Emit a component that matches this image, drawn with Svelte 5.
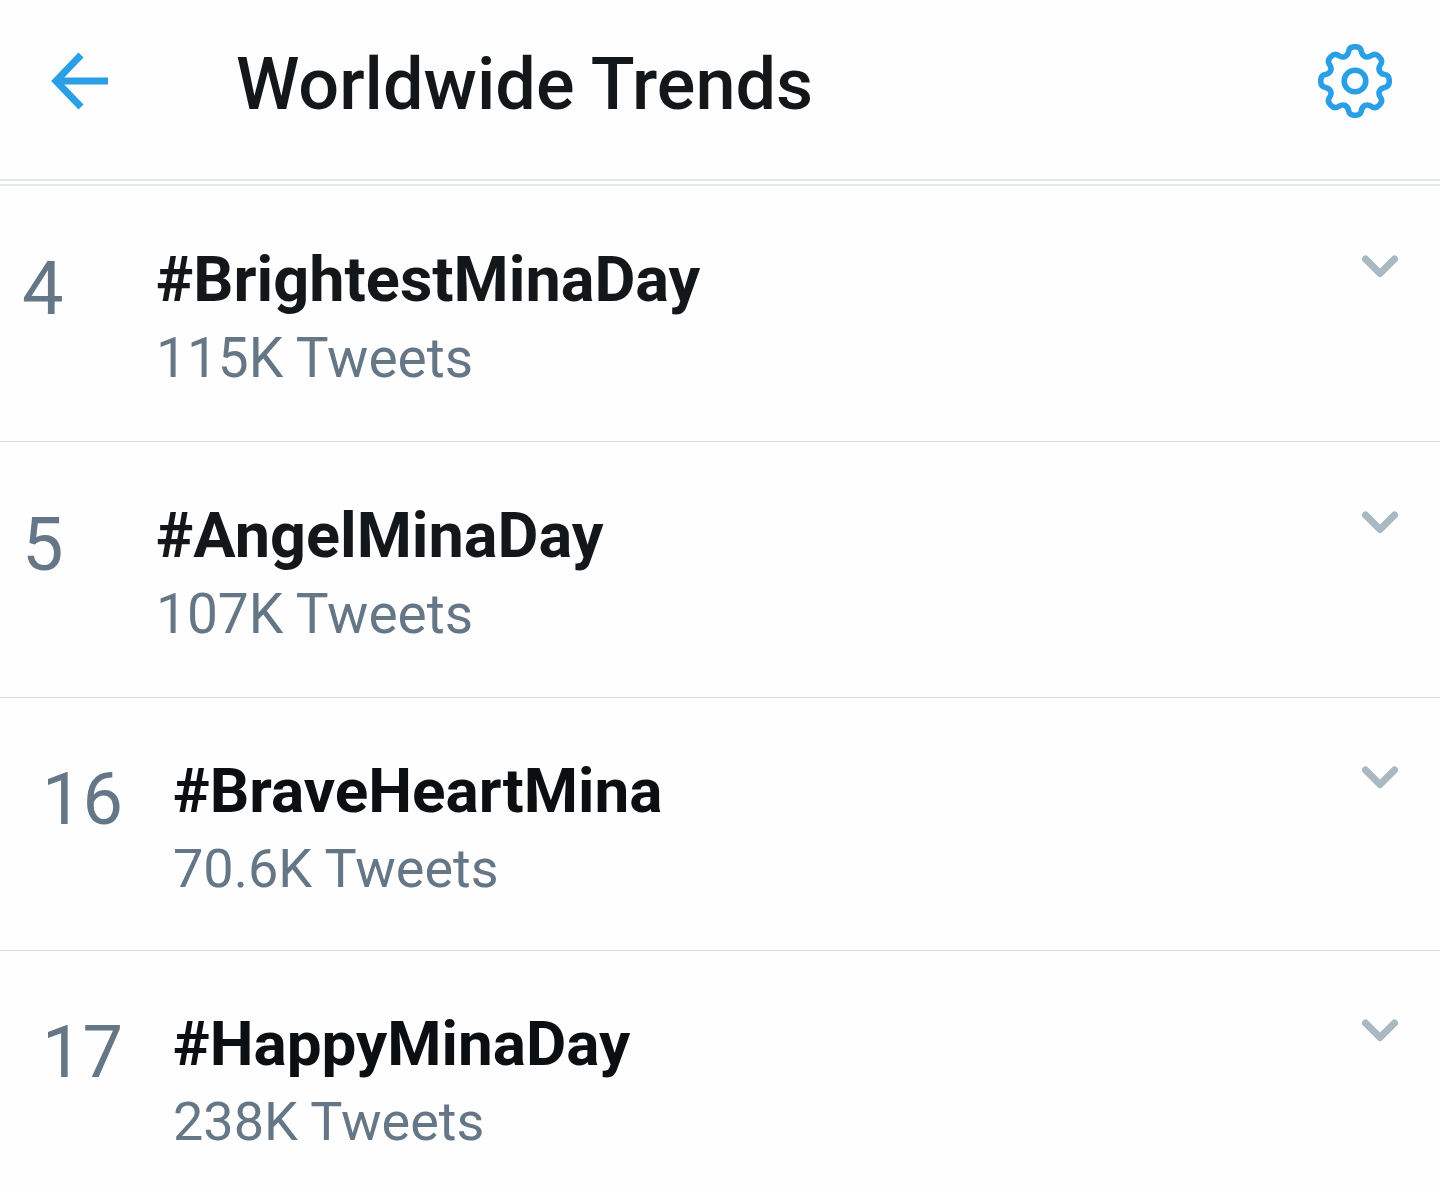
<script lang="ts">
  interface Trend {
    rank: number;
    name: string;
    tweets: string;
  }

  const trends: Trend[] = [
    { rank: 4, name: '#BrightestMinaDay', tweets: '115K' },
    { rank: 5, name: '#AngelMinaDay', tweets: '107K' },
    { rank: 16, name: '#BraveHeartMina', tweets: '70.6K' },
    { rank: 17, name: '#HappyMinaDay', tweets: '238K' },
  ];

  // one gear tooth, valley to valley, around the origin
  const tooth = [
    [-7.4, -25.6], [-6.8, -27.4], [-6.4, -29.6],
    [-5.9, -32.8], [-3.8, -34.3], [0, -34.3],
    [3.8, -34.3], [5.9, -32.8], [6.4, -29.6],
    [6.8, -27.4], [7.4, -25.6], [10.1, -24.4],
  ];

  function rotate([x, y]: number[], angle: number): string {
    const c = Math.cos(angle);
    const s = Math.sin(angle);
    return `${(x * c - y * s).toFixed(2)} ${(x * s + y * c).toFixed(2)}`;
  }

  function gearPath(teeth: number): string {
    let d = `M${rotate([-10.1, -24.4], 0)}`;
    for (let i = 0; i < teeth; i++) {
      const angle = (i * 2 * Math.PI) / teeth;
      d += ' C' + tooth.map((p) => rotate(p, angle)).join(' ');
    }
    return d + 'Z';
  }
</script>

<header class="header">
  <button class="icon-btn back" type="button" aria-label="Back">
    <svg width="58" height="58" viewBox="0 0 58 58">
      <path d="M58 29H8M31 3L6 29l25 26" />
    </svg>
  </button>
  <h1 class="title">Worldwide Trends</h1>
  <button class="icon-btn gear" type="button" aria-label="Trend settings">
    <svg width="74" height="74" viewBox="-37 -37 74 74">
      <path d={gearPath(8)} />
      <circle r="10.8" />
    </svg>
  </button>
</header>

<main>
  <ol class="trends">
    {#each trends as trend (trend.rank)}
      <li class="trend" class:wide={trend.rank > 9}>
        <span class="rank">{trend.rank}</span>
        <div class="info">
          <h2 class="name">{trend.name}</h2>
          <p class="count">{trend.tweets} Tweets</p>
        </div>
        <button class="icon-btn more" type="button" aria-label="More options for {trend.name}">
          <svg width="36" height="24" viewBox="0 0 36 24">
            <path d="M3.5 4L18 18.5 32.5 4" />
          </svg>
        </button>
      </li>
    {/each}
  </ol>
</main>

<style>
  :global(body) {
    margin: 0;
    background: #fefefe;
    font-family: Roboto, sans-serif;
    color: #14171a;
  }

  .header {
    display: flex;
    align-items: flex-start;
    padding: 44px 48px 54px 50px;
    border-bottom: 2px solid #e1e8e8;
  }

  .title {
    flex: 1;
    margin: 0 0 0 128px;
    font-size: 72px;
    font-weight: 500;
    line-height: 81px;
  }

  .icon-btn {
    display: block;
    flex: none;
    padding: 0;
    border: none;
    background: none;
    cursor: pointer;
  }

  .icon-btn svg {
    display: block;
    fill: none;
    stroke: #2b9fe6;
  }

  .back {
    padding: 8px 0;
  }

  .back svg {
    stroke-width: 7;
  }

  .gear svg {
    stroke-width: 5.6;
  }

  .trends {
    margin: 3px 0 0;
    padding: 0;
    list-style: none;
    border-top: 2px solid #e1e8e8;
  }

  .trend {
    display: flex;
    align-items: flex-start;
    padding: 56px 42px 51px 22px;
    border-bottom: 1px solid #d3dcde;
  }

  .trend:last-child {
    border-bottom: none;
  }

  .rank {
    flex: none;
    width: 134px;
    padding-top: 9px;
    font-size: 74px;
    line-height: 76px;
    color: #657786;
  }

  .info {
    flex: 1;
  }

  .name {
    margin: 0;
    font-size: 63px;
    font-weight: 700;
    line-height: 76px;
  }

  .count {
    margin: 8px 0 0;
    font-size: 55px;
    line-height: 64px;
    color: #657786;
  }

  .more {
    margin-top: 13px;
  }

  .more svg {
    stroke: #aab8c2;
    stroke-width: 7;
    stroke-linecap: round;
    stroke-linejoin: round;
  }

  /* two-digit ranks sit further in, on slightly tighter rows */
  .wide {
    padding: 55px 42px 49px 42px;
  }

  .wide .rank {
    width: 131px;
    font-size: 72px;
  }

  .wide .name {
    font-size: 62px;
    color: #0b0f12;
  }

  .wide .count {
    font-size: 54px;
  }
</style>
